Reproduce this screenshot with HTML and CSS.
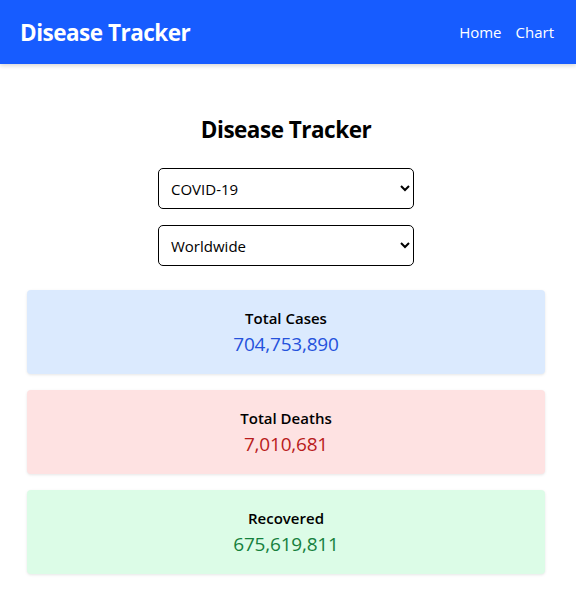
FILE: index.html
```html
<!DOCTYPE html>
<html>
<head>
<meta charset="utf-8">
<link rel="stylesheet" href="styles.css">
</head>
<body>
<header class="topbar">
  <div class="brand">Disease Tracker</div>
  <nav class="nav">
    <a href="#">Home</a>
    <a href="#">Chart</a>
  </nav>
</header>
<main class="main">
  <h1 class="title">Disease Tracker</h1>
  <div class="controls">
    <select class="select"><option>COVID-19</option></select>
    <select class="select"><option>Worldwide</option></select>
  </div>
  <div class="cards">
    <div class="card card-blue">
      <div class="label">Total Cases</div>
      <div class="value">704,753,890</div>
    </div>
    <div class="card card-red">
      <div class="label">Total Deaths</div>
      <div class="value">7,010,681</div>
    </div>
    <div class="card card-green">
      <div class="label">Recovered</div>
      <div class="value">675,619,811</div>
    </div>
  </div>
</main>
</body>
</html>
```
FILE: styles.css
```css
* { box-sizing: border-box; }
body {
  margin: 0;
  font-family: "Open Sans", "Noto Sans", sans-serif;
  color: #000;
  background: #fff;
}
.topbar {
  height: 64px;
  background: #175cff;
  color: #fff;
  display: flex;
  align-items: center;
  justify-content: space-between;
  padding: 0 20px;
  box-shadow: 0 2px 4px rgba(0,0,0,0.15);
}
.brand {
  font-size: 22.5px;
  font-weight: 700;
  letter-spacing: -0.5px;
}
.nav {
  display: flex;
  gap: 14px;
  padding-right: 2px;
}
.nav a {
  color: #fff;
  text-decoration: none;
  font-size: 15px;
}
.main {
  padding: 50px 31px 24px 27px;
}
.title {
  margin: 0 0 22px;
  text-align: center;
  font-size: 22.5px;
  line-height: 32px;
  font-weight: 700;
  letter-spacing: -0.5px;
}
.controls {
  display: flex;
  flex-direction: column;
  align-items: center;
  gap: 16px;
  margin-bottom: 24px;
}
.select {
  width: 256px;
  height: 41px;
  padding: 0 8px;
  border: 1px solid #000;
  border-radius: 5px;
  background: #fff;
  font-family: inherit;
  font-size: 15px;
  color: #000;
}
.cards {
  display: flex;
  flex-direction: column;
  gap: 16px;
}
.card {
  padding: 16px;
  border-radius: 4px;
  text-align: center;
  box-shadow: 0 1px 3px rgba(0,0,0,0.1);
}
.label {
  font-size: 15px;
  line-height: 24px;
  font-weight: 600;
}
.value {
  font-size: 19px;
  line-height: 28px;
  letter-spacing: -0.2px;
}
.card-blue { background: #dbeafe; }
.card-blue .value { color: #2552dc; }
.card-red { background: #fee2e2; }
.card-red .value { color: #b91c1c; }
.card-green { background: #dcfce7; }
.card-green .value { color: #15803d; }
```
